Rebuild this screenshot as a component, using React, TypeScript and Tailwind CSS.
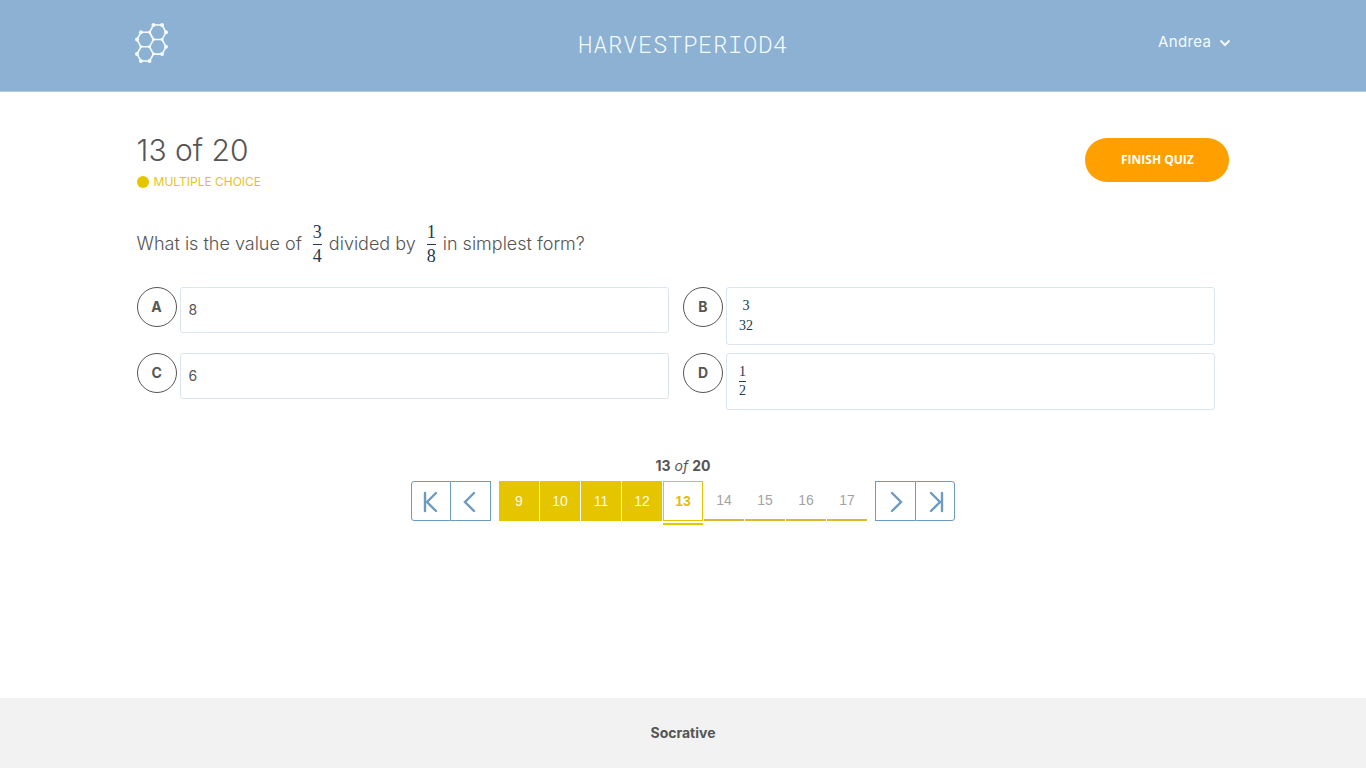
import React, { useState } from 'react';

const FIRST_VISIBLE = 9;
const TOTAL = 20;

const Logo = () => (
  <svg className="h-10 w-[33px]" viewBox="44 38 100 121" fill="none" stroke="#f4fbff" strokeWidth="5">
    <path d="M100 44H126L138 66L126 88H100L88 66Z" />
    <path d="M62 66H88L100 88L88 110H62L50 88Z" />
    <path d="M126 88L138 110L126 132H100L88 110" />
    <path d="M100 132L88 153H62L50 132L62 110" />
    <g fill="#f4fbff" stroke="none">
      {[[100, 44], [126, 44], [138, 66], [62, 66], [50, 88], [138, 110], [126, 132], [50, 132], [62, 153], [88, 153]].map(([x, y]) => (
        <circle key={`${x}-${y}`} cx={x} cy={y} r="6" />
      ))}
      {[[126, 88], [100, 88], [88, 66], [88, 110], [62, 110], [100, 132]].map(([x, y]) => (
        <circle key={`${x}-${y}`} cx={x} cy={y} r="4.5" />
      ))}
    </g>
  </svg>
);

const Arrow = ({ d }: { d: string }) => (
  <svg className="size-6" viewBox="0 0 24 24" fill="none" stroke="#6c9bbf" strokeWidth="2.4" strokeLinecap="round">
    <path d={d} />
  </svg>
);

type FractionProps = { top: string; bottom: string; large?: boolean; bar?: boolean };

const Fraction = ({ top, bottom, large = false, bar = true }: FractionProps) => (
  <span
    className={`inline-flex flex-col items-center font-['Liberation_Serif',serif] font-normal text-[#22384f] ${
      large ? 'text-lg leading-6' : 'text-sm leading-[18px]'
    }`}
  >
    <span>{top}</span>
    <span className={`w-full ${bar ? 'h-px bg-[#22384f]' : 'h-0.5'}`} />
    <span className={large ? 'leading-[22px]' : ''}>{bottom}</span>
  </span>
);

const answers = [
  { letter: 'A', content: '8' },
  { letter: 'B', content: <Fraction top="3" bottom="32" bar={false} /> },
  { letter: 'C', content: '6' },
  { letter: 'D', content: <Fraction top="1" bottom="2" /> },
];

const App = () => {
  const [current, setCurrent] = useState(13);
  const pages = Array.from({ length: 9 }, (_, i) => FIRST_VISIBLE + i);

  const pageClass = (page: number) => {
    if (page < current) return 'h-10 bg-[#e5c400] text-[#fffbe0]';
    if (page === current) {
      return "relative h-10 border border-[#e5c400] font-bold text-[#e0bf10] after:absolute after:-inset-x-px after:-bottom-[5px] after:h-0.5 after:bg-[#e5c400] after:content-['']";
    }
    return 'h-10 border-b-2 border-[#dfb930] text-[#a3a3a3]';
  };

  const navClass = 'flex h-10 items-center justify-center border-[#6c9bbf]';

  return (
    <div className="flex min-h-screen flex-col bg-white font-['Inter',sans-serif] text-[#555]">
      <header className="border-b border-[#b3c8da] bg-[#8cb1d2]">
        <div className="mx-auto grid h-[91px] w-4/5 grid-cols-[1fr_auto_1fr] items-center pb-1.5">
          <a href="#" aria-label="Home" className="-ml-0.5 justify-self-start">
            <Logo />
          </a>
          <h1 className="pt-0.5 font-['Roboto_Mono','Liberation_Mono',monospace] text-2xl leading-8 font-light tracking-wide text-[#f4fbff]">
            HARVESTPERIOD4
          </h1>
          <button className="-mr-0.5 flex items-center gap-2 justify-self-end text-[15px] tracking-wide text-[#f4fbff]">
            Andrea
            <svg className="size-3" viewBox="0 0 12 12" fill="none" stroke="currentColor" strokeWidth="2">
              <path d="M1.5 3.5L6 8L10.5 3.5" />
            </svg>
          </button>
        </div>
      </header>

      <main className="mx-auto w-4/5 flex-1 pt-10">
        <div className="flex items-start justify-between">
          <div>
            <h2 className="text-3xl leading-9 font-light">{current} of {TOTAL}</h2>
            <p className="mt-1 flex items-center gap-[5px] text-xs leading-5 text-[#dfc61c]">
              <span className="size-3 rounded-full bg-[#e5c400]" />
              MULTIPLE CHOICE
            </p>
          </div>
          <button className="mt-1.5 h-11 w-36 rounded-full bg-[#ffa000] pb-px font-['Open_Sans',sans-serif] text-xs font-bold text-white">
            FINISH QUIZ
          </button>
        </div>

        {/* Question */}
        <p className="mt-[26px] flex min-h-[51px] flex-wrap items-center text-lg font-light">
          <span className="mr-[11px]">What is the value of</span>
          <Fraction top="3" bottom="4" large />
          <span className="mr-[11px] ml-[7px]">divided by</span>
          <Fraction top="1" bottom="8" large />
          <span className="ml-[7px]">in simplest form?</span>
        </p>

        {/* Answers */}
        <div className="mt-[18px] grid grid-cols-2 gap-y-2">
          {answers.map(({ letter, content }) => (
            <button key={letter} className="flex items-start gap-[3px] pr-3.5 text-left">
              <span className="flex size-10 shrink-0 items-center justify-center rounded-full border border-[#555] text-sm font-bold">
                {letter}
              </span>
              <span
                className={`flex flex-1 items-center rounded-[3px] border border-[#dce4ec] text-sm ${
                  typeof content === 'string' ? 'h-[46px] pl-2' : 'py-[9px] pl-3'
                }`}
              >
                {content}
              </span>
            </button>
          ))}
        </div>

        {/* Pagination */}
        <p className="mt-[46px] text-center text-sm leading-5">
          <b>{current}</b> <i>of</i> <b>{TOTAL}</b>
        </p>
        <nav className="mt-[5px] flex justify-center gap-2">
          <div className="flex">
            <button aria-label="First" className={`${navClass} w-10 rounded-l-[3px] border`} onClick={() => setCurrent(1)}>
              <Arrow d="M6 4V22M17 4L8 13L17 22" />
            </button>
            <button aria-label="Previous" className={`${navClass} w-10 border-y border-r`} onClick={() => setCurrent(Math.max(1, current - 1))}>
              <Arrow d="M16 4L7 13L16 22" />
            </button>
          </div>
          <div className="flex gap-px font-['Liberation_Sans',sans-serif] text-sm">
            {pages.map((page) => (
              <button key={page} className={`w-10 ${pageClass(page)}`} onClick={() => setCurrent(page)}>
                {page}
              </button>
            ))}
          </div>
          <div className="flex">
            <button aria-label="Next" className={`${navClass} w-10 border-y border-l`} onClick={() => setCurrent(Math.min(TOTAL, current + 1))}>
              <Arrow d="M9 4L18 13L9 22" />
            </button>
            <button aria-label="Last" className={`${navClass} w-10 rounded-r-[3px] border`} onClick={() => setCurrent(TOTAL)}>
              <Arrow d="M8 4L17 13L8 22M19 4V22" />
            </button>
          </div>
        </nav>
      </main>

      <footer className="flex h-[70px] items-center justify-center bg-[#f2f2f2] text-sm font-bold">
        Socrative
      </footer>
    </div>
  );
};

export default App;
